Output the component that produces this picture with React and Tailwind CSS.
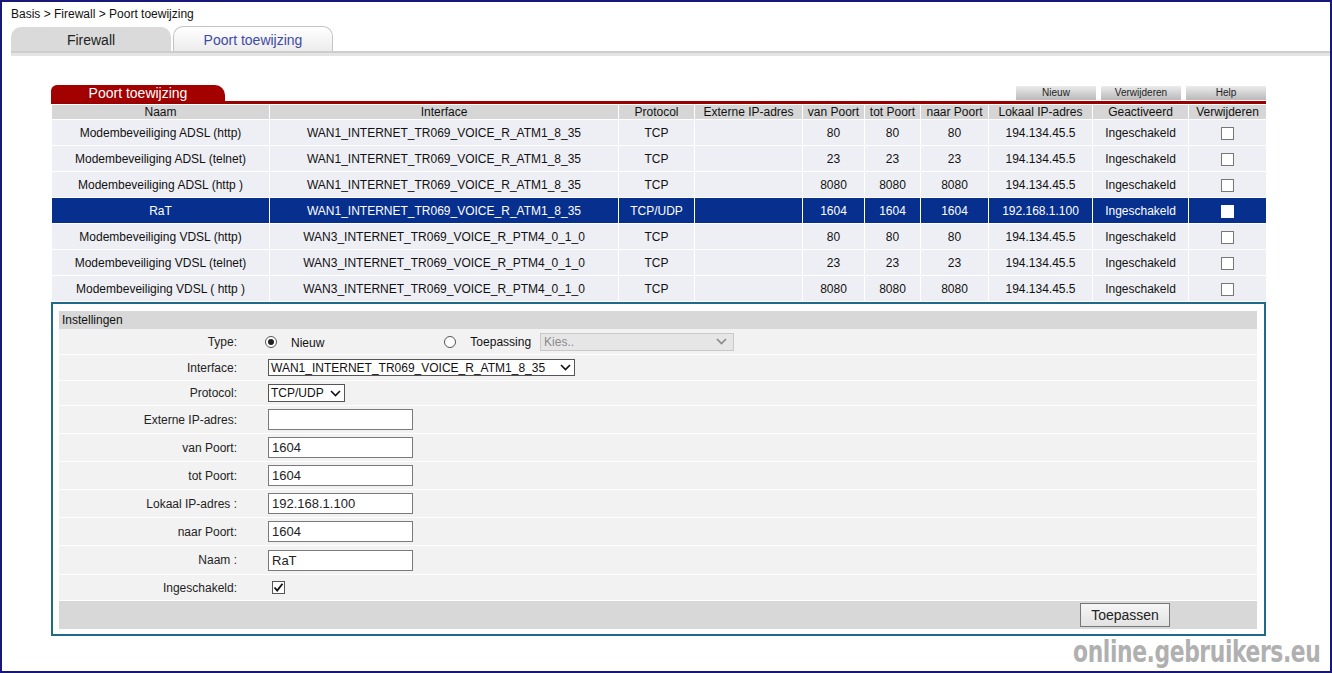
import React from 'react';

const cols = [218, 349, 76, 108, 62, 56, 68, 104, 96, 78];
const heads = ['Naam', 'Interface', 'Protocol', 'Externe IP-adres', 'van Poort', 'tot Poort', 'naar Poort', 'Lokaal IP-adres', 'Geactiveerd', 'Verwijderen'];

const rows = [
  ['Modembeveiliging ADSL (http)', 'WAN1_INTERNET_TR069_VOICE_R_ATM1_8_35', 'TCP', '', '80', '80', '80', '194.134.45.5'],
  ['Modembeveiliging ADSL (telnet)', 'WAN1_INTERNET_TR069_VOICE_R_ATM1_8_35', 'TCP', '', '23', '23', '23', '194.134.45.5'],
  ['Modembeveiliging ADSL (http )', 'WAN1_INTERNET_TR069_VOICE_R_ATM1_8_35', 'TCP', '', '8080', '8080', '8080', '194.134.45.5'],
  ['RaT', 'WAN1_INTERNET_TR069_VOICE_R_ATM1_8_35', 'TCP/UDP', '', '1604', '1604', '1604', '192.168.1.100', true],
  ['Modembeveiliging VDSL (http)', 'WAN3_INTERNET_TR069_VOICE_R_PTM4_0_1_0', 'TCP', '', '80', '80', '80', '194.134.45.5'],
  ['Modembeveiliging VDSL (telnet)', 'WAN3_INTERNET_TR069_VOICE_R_PTM4_0_1_0', 'TCP', '', '23', '23', '23', '194.134.45.5'],
  ['Modembeveiliging VDSL ( http )', 'WAN3_INTERNET_TR069_VOICE_R_PTM4_0_1_0', 'TCP', '', '8080', '8080', '8080', '194.134.45.5'],
];

function Chevron({ color = '#111' }) {
  return (
    <svg width="11" height="7" viewBox="0 0 11 7" className="shrink-0">
      <path d="M1 1 L5.5 5.5 L10 1" fill="none" stroke={color} strokeWidth="1.6" />
    </svg>
  );
}

function Radio({ on }) {
  return (
    <span className="w-[12px] h-[12px] rounded-full border border-[#555] bg-white flex items-center justify-center shrink-0">
      {on && <span className="w-[6px] h-[6px] rounded-full bg-[#222]" />}
    </span>
  );
}

function TextInput({ value }) {
  return (
    <div className="w-[145px] h-[21px] border border-[#7a7a7a] bg-white text-[13px] leading-[19px] pl-[3px] text-[#222]">
      {value}
    </div>
  );
}

function FormRow({ label, h, children }) {
  return (
    <div className={`flex items-center bg-[#f2f2f2] border-b border-white ${h}`}>
      <div className="w-[178px] text-right text-[12px] text-[#222]">{label}</div>
      <div className="pl-[31px] flex items-center">{children}</div>
    </div>
  );
}

export default function App() {
  return (
    <div className="w-[1332px] h-[673px] border-2 border-[#17187a] bg-white relative overflow-hidden font-['Liberation_Sans',Arial,sans-serif] text-[#111]">
      {/* breadcrumb */}
      <div className="pl-[9px] pt-[5px] text-[12px] leading-[14px]">Basis &gt; Firewall &gt; Poort toewijzing</div>

      {/* tabs */}
      <div className="flex items-end gap-[2px] ml-[9px] mt-[5px] h-[25px]">
        <div className="w-[160px] h-[24px] rounded-t-[10px] bg-[#dadada] flex items-center justify-center pt-[2px] text-[14px] text-[#222]">Firewall</div>
        <div className="w-[160px] h-[25px] rounded-t-[10px] border border-b-0 border-[#c4c4c4] bg-gradient-to-b from-white to-[#ececec] flex items-center justify-center pt-[2px] text-[14px] text-[#3d4ba3]">Poort toewijzing</div>
      </div>
      <div className="ml-[9px] h-[5px] bg-[#e4e4e4] border-t-2 border-[#cdcdcd]" />

      {/* main */}
      <div className="ml-[49px] mt-[29px] w-[1215px]">
        <div className="flex items-end justify-between h-[16px]">
          <div className="w-[174px] h-[16px] bg-[#a30000] rounded-tl-[6px] rounded-tr-[10px] text-white text-[14px] leading-[16px] text-center">Poort toewijzing</div>
          <div className="flex gap-[5px] pb-[1px]">
            {['Nieuw', 'Verwijderen', 'Help'].map(b => (
              <div key={b} className="w-[80px] h-[14px] bg-gradient-to-b from-[#ececec] to-[#b9b9b9] text-[10px] leading-[14px] text-center text-[#222]">{b}</div>
            ))}
          </div>
        </div>
        <div className="h-[3px] bg-[#9b0000]" />

        <table className="table-fixed border-collapse w-[1215px] text-[12px] text-center">
          <colgroup>
            {cols.map((w, i) => <col key={i} style={{ width: w }} />)}
          </colgroup>
          <thead>
            <tr className="h-[15px] bg-[#d6d6d6]">
              {heads.map(h => <th key={h} className="font-normal border border-white leading-[14px] p-0">{h}</th>)}
            </tr>
          </thead>
          <tbody>
            {rows.map((r, i) => (
              <tr key={i} className={`h-[26px] ${r[8] ? 'bg-[#07308e] text-white' : 'bg-[#eeeff4]'}`}>
                {r.slice(0, 8).map((c, j) => <td key={j} className="border border-white p-0 whitespace-nowrap">{c}</td>)}
                <td className="border border-white p-0">Ingeschakeld</td>
                <td className="border border-white p-0">
                  <span className={`inline-block align-middle w-[13px] h-[13px] border ${r[8] ? 'bg-white border-white' : 'bg-white border-[#777]'}`} />
                </td>
              </tr>
            ))}
          </tbody>
        </table>

        {/* settings */}
        <div className="border-2 border-[#1f6a8b] pl-[6px] pr-[7px] pt-[7px] pb-[5px]">
          <div className="h-[18px] bg-[#d8d8d8] text-[12px] leading-[18px] pl-[3px]">Instellingen</div>
          <FormRow label="Type:" h="h-[26px]">
            <span className="-ml-[3px]"><Radio on /></span>
            <span className="ml-[14px] text-[12px] mt-[2px]">Nieuw</span>
            <span className="ml-[120px]"><Radio /></span>
            <span className="ml-[14px] text-[12px]">Toepassing</span>
            <div className="ml-[9px] w-[194px] h-[18px] bg-[#e6e6e6] border border-[#c9c9c9] flex items-center justify-between pl-[3px] pr-[6px] text-[12px] text-[#8a8a8a]">
              <span>Kies..</span>
              <Chevron color="#888" />
            </div>
          </FormRow>
          <FormRow label="Interface:" h="h-[26px]">
            <div className="w-[307px] h-[17px] bg-white border border-[#555] flex items-center justify-between pl-[2px] pr-[3px] text-[12px]">
              <span>WAN1_INTERNET_TR069_VOICE_R_ATM1_8_35</span>
              <Chevron />
            </div>
          </FormRow>
          <FormRow label="Protocol:" h="h-[25px]">
            <div className="w-[77px] h-[18px] bg-white border border-[#555] flex items-center justify-between pl-[2px] pr-[3px] text-[12px]">
              <span>TCP/UDP</span>
              <Chevron />
            </div>
          </FormRow>
          <FormRow label="Externe IP-adres:" h="h-[28px]"><TextInput value="" /></FormRow>
          <FormRow label="van Poort:" h="h-[28px]"><TextInput value="1604" /></FormRow>
          <FormRow label="tot Poort:" h="h-[28px]"><TextInput value="1604" /></FormRow>
          <FormRow label="Lokaal IP-adres :" h="h-[28px]"><TextInput value="192.168.1.100" /></FormRow>
          <FormRow label="naar Poort:" h="h-[28px]"><TextInput value="1604" /></FormRow>
          <FormRow label="Naam :" h="h-[29px]"><TextInput value="RaT" /></FormRow>
          <FormRow label="Ingeschakeld:" h="h-[26px]">
            <span className="ml-[4px] w-[13px] h-[13px] border border-[#555] bg-white flex items-center justify-center">
              <svg width="11" height="11" viewBox="0 0 11 11">
                <path d="M1.5 5.5 L4.2 8.5 L9.5 1.8" fill="none" stroke="#111" strokeWidth="1.8" />
              </svg>
            </span>
          </FormRow>
          <div className="h-[28px] bg-[#d8d8d8] flex items-center justify-end pr-[87px]">
            <div className="w-[90px] h-[24px] border border-[#767676] bg-gradient-to-b from-[#f6f6f6] to-[#e2e2e2] text-[14px] leading-[22px] text-center text-[#222]">Toepassen</div>
          </div>
        </div>
      </div>

      {/* watermark */}
      <div className="absolute right-[10px] bottom-[2px] origin-right scale-x-[0.81] text-[30px] leading-[34px] font-bold font-['DejaVu_Sans_Condensed','Liberation_Sans_Narrow',sans-serif] tracking-[-0.5px] text-[#b0b0b0] [text-shadow:0_0_2px_#fff,1px_1px_0_#fff]">
        online.gebruikers.eu
      </div>
    </div>
  );
}
